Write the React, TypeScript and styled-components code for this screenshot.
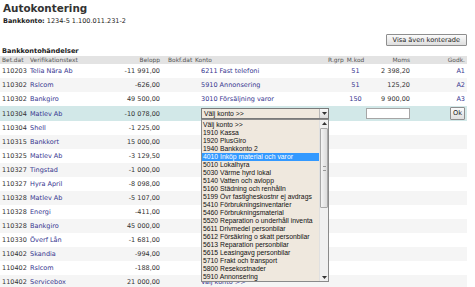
import React from "react";
import styled, { createGlobalStyle } from "styled-components";

const Global = createGlobalStyle`
  html, body { margin: 0; padding: 0; background: #fff; overflow: hidden; }
  body { font-family: "DejaVu Sans", Verdana, sans-serif; color: #333; }
`;

const Page = styled.div`
  padding: 2px 0 0 3px;
  width: 467px;
`;

const Title = styled.h1`
  margin: 0;
  font-size: 10.4px;
  line-height: 13px;
  font-weight: bold;
  color: #333;
`;

const AccountLine = styled.div`
  font-size: 6.5px;
  line-height: 10px;
  margin-top: 1px;
  color: #222;
  b { font-weight: bold; }
`;

const Toolbar = styled.div`
  display: flex;
  justify-content: flex-end;
  margin-top: 8px;
  padding-right: 3px;
`;

const Button = styled.button<{ $h?: number; $px?: number }>`
  font-family: "DejaVu Sans", Verdana, sans-serif;
  font-size: 6.6px;
  color: #222;
  height: ${(p) => p.$h ?? 12}px;
  padding: 0 ${(p) => p.$px ?? 6}px;
  border: 1px solid #8e8e8e;
  border-radius: 1px;
  background: linear-gradient(#fbfbfb, #dedede);
  line-height: 1;
`;

const Section = styled.div`
  margin-left: -3px;
`;

const SectionTitle = styled.div`
  font-size: 6.6px;
  font-weight: bold;
  line-height: 9px;
  padding: 1px 0 0 2px;
  color: #222;
`;

const Table = styled.table`
  border-collapse: collapse;
  table-layout: fixed;
  width: 467px;
  font-size: 6.5px;
`;

const HeadRow = styled.tr`
  background: #e3e3e3;
  height: 8px;
`;

type Align = { $align?: "left" | "right" | "center"; $pl?: number; $pr?: number };

const Th = styled.th<Align>`
  font-weight: normal;
  font-size: 5.9px;
  color: #555;
  text-align: ${(p) => p.$align ?? "left"};
  padding: 0 ${(p) => p.$pr ?? 0}px 0 ${(p) => p.$pl ?? 0}px;
  line-height: 8px;
  white-space: nowrap;
  overflow: hidden;
`;

const Row = styled.tr<{ $variant: "plain" | "stripe" | "active" }>`
  height: ${(p) => (p.$variant === "active" ? 15 : 14)}px;
  background: ${(p) =>
    p.$variant === "active" ? "#d2e8e8" : p.$variant === "stripe" ? "#f5f5f5" : "#fff"};
`;

const Td = styled.td<Align>`
  text-align: ${(p) => p.$align ?? "left"};
  padding: 0 ${(p) => p.$pr ?? 0}px 0 ${(p) => p.$pl ?? 0}px;
  white-space: nowrap;
  overflow: visible;
  color: #333;
  vertical-align: middle;
`;

const Link = styled.span<{ $indent?: number }>`
  color: #35358f;
  padding-left: ${(p) => p.$indent ?? 0}px;
`;

const SelectWrap = styled.div`
  position: relative;
  width: 128px;
  margin-left: 8px;
`;

const SelectBox = styled.div`
  display: flex;
  align-items: center;
  height: 11px;
  box-sizing: border-box;
  border: 1px solid #7a7a7a;
  background: #efe8de;
  font-family: "Liberation Sans", Arial, sans-serif;
  font-size: 6.8px;
  color: #111;
`;

const SelectText = styled.span`
  flex: 1;
  padding-left: 2px;
`;

const ArrowBtn = styled.span`
  width: 8px;
  height: 9px;
  border-left: 1px solid #b8b8b8;
  background: linear-gradient(#fafafa, #dcdcdc);
  display: flex;
  align-items: center;
  justify-content: center;
  svg { display: block; }
`;

const ListBox = styled.div`
  position: absolute;
  left: 0;
  top: 11px;
  width: 128px;
  height: 163px;
  box-sizing: border-box;
  border: 1px solid #8a8a8a;
  background: #efe8de;
  display: flex;
  z-index: 5;
`;

const Options = styled.div`
  flex: 1;
  padding-top: 1px;
  overflow: hidden;
`;

const Option = styled.div<{ $selected?: boolean }>`
  font-family: "Liberation Sans", Arial, sans-serif;
  font-size: 6.8px;
  line-height: 8px;
  height: 8px;
  padding-left: 1px;
  white-space: nowrap;
  overflow: hidden;
  color: ${(p) => (p.$selected ? "#fff" : "#111")};
  background: ${(p) => (p.$selected ? "#3399ff" : "transparent")};
`;

const ScrollBar = styled.div`
  width: 8px;
  background: #f0f0f0;
  border-left: 1px solid #e0e0e0;
  display: flex;
  flex-direction: column;
`;

const ScrollArrow = styled.div`
  height: 7px;
  display: flex;
  align-items: center;
  justify-content: center;
`;

const Thumb = styled.div`
  margin-top: 1px;
  height: 80px;
  box-sizing: border-box;
  border: 1px solid #a8a8a8;
  border-radius: 1px;
  background: linear-gradient(90deg, #f4f4f4, #dcdcdc);
  display: flex;
  align-items: center;
  justify-content: center;
`;

const Grip = styled.div`
  width: 3px;
  height: 3px;
  border-top: 1px solid #999;
  border-bottom: 1px solid #999;
`;

const Track = styled.div`
  flex: 1;
`;

const AmountInput = styled.input`
  width: 44px;
  height: 11px;
  box-sizing: border-box;
  border: 1px solid #a6a6a6;
  background: #fff;
  padding: 0;
  display: block;
  margin-left: auto;
  margin-right: 3px;
`;

type Rec = {
  d: string;
  t: string;
  b: string;
  k?: string;
  m?: string;
  moms?: string;
  g?: string;
  edit?: boolean;
};

const rows: Rec[] = [
  { d: "110203", t: "Telia Nära Ab", b: "-11 991,00", k: "6211 Fast telefoni", m: "51", moms: "2 398,20", g: "A1" },
  { d: "110302", t: "Rslcom", b: "-626,00", k: "5910 Annonsering", m: "51", moms: "125,20", g: "A2" },
  { d: "110302", t: "Bankgiro", b: "49 500,00", k: "3010 Försäljning varor", m: "150", moms: "9 900,00", g: "A3" },
  { d: "110304", t: "Matlev Ab", b: "-10 078,00", edit: true },
  { d: "110304", t: "Shell", b: "-1 225,00" },
  { d: "110315", t: "Bankkort", b: "15 000,00" },
  { d: "110325", t: "Matlev Ab", b: "-3 129,50" },
  { d: "110327", t: "Tingstad", b: "-1 000,00" },
  { d: "110327", t: "Hyra April", b: "-8 098,00" },
  { d: "110328", t: "Matlev Ab", b: "-5 107,00" },
  { d: "110328", t: "Energi", b: "-411,00" },
  { d: "110328", t: "Bankgiro", b: "45 000,00" },
  { d: "110330", t: "Överf Lån", b: "-1 681,00" },
  { d: "110402", t: "Skandia", b: "-994,00" },
  { d: "110402", t: "Rslcom", b: "-188,00" },
  { d: "110402", t: "Servicebox", b: "21 000,00", k: "Välj konto >>" },
];

const options = [
  "Välj konto >>",
  "1910 Kassa",
  "1920 PlusGiro",
  "1940 Bankkonto 2",
  "4010 Inköp material och varor",
  "5010 Lokalhyra",
  "5030 Värme hyrd lokal",
  "5140 Vatten och avlopp",
  "5160 Städning och renhålln",
  "5199 Övr fastigheskostnr ej avdrags",
  "5410 Förbrukningsinventarier",
  "5460 Förbrukningsmaterial",
  "5520 Reparation o underhåll inventa",
  "5611 Drivmedel personbilar",
  "5612 Försäkring o skatt personbilar",
  "5613 Reparation personbilar",
  "5615 Leasingavg personbilar",
  "5710 Frakt och transport",
  "5800 Resekostnader",
  "5910 Annonsering",
];

const Tri = ({ up }: { up?: boolean }) => (
  <svg width="5" height="3" viewBox="0 0 5 3">
    <path d={up ? "M0 3 L2.5 0 L5 3 Z" : "M0 0 L5 0 L2.5 3 Z"} fill="#333" />
  </svg>
);

const widths = [29, 86, 47, 31, 132, 20, 21, 46, 55];

export default function App() {
  return (
    <>
      <Global />
      <Page>
        <Title>Autokontering</Title>
        <AccountLine>
          <b>Bankkonto:</b> 1234-5 1.100.011.231-2
        </AccountLine>
        <Toolbar>
          <Button>Visa även konterade</Button>
        </Toolbar>
        <Section>
          <SectionTitle>Bankkontohändelser</SectionTitle>
          <Table>
            <colgroup>
              {widths.map((w, i) => (
                <col key={i} style={{ width: w }} />
              ))}
            </colgroup>
            <thead>
              <HeadRow>
                <Th $pl={2}>Bet.dat</Th>
                <Th $pl={1}>Verifikationstext</Th>
                <Th $align="right" $pr={2}>Belopp</Th>
                <Th $pl={6}>Bokf.dat</Th>
                <Th $pl={2}>Konto</Th>
                <Th $pl={3}>R.grp</Th>
                <Th $align="center">M.kod</Th>
                <Th $align="right" $pr={2}>Moms</Th>
                <Th $align="right" $pr={2}>Godk.</Th>
              </HeadRow>
            </thead>
            <tbody>
              {rows.map((r, i) => (
                <Row key={i} $variant={r.edit ? "active" : i % 2 === 1 ? "stripe" : "plain"}>
                  <Td $pl={2}>{r.d}</Td>
                  <Td $pl={1}>
                    <Link>{r.t}</Link>
                  </Td>
                  <Td $align="right" $pr={2}>{r.b}</Td>
                  <Td $pl={6}></Td>
                  <Td>
                    {r.edit ? (
                      <SelectWrap>
                        <SelectBox>
                          <SelectText>Välj konto &gt;&gt;</SelectText>
                          <ArrowBtn>
                            <Tri />
                          </ArrowBtn>
                        </SelectBox>
                        <ListBox>
                          <Options>
                            {options.map((o, j) => (
                              <Option key={j} $selected={j === 4}>
                                {o}
                              </Option>
                            ))}
                          </Options>
                          <ScrollBar>
                            <ScrollArrow>
                              <Tri up />
                            </ScrollArrow>
                            <Thumb>
                              <Grip />
                            </Thumb>
                            <Track />
                            <ScrollArrow>
                              <Tri />
                            </ScrollArrow>
                          </ScrollBar>
                        </ListBox>
                      </SelectWrap>
                    ) : r.k ? (
                      <Link $indent={8}>{r.k}</Link>
                    ) : null}
                  </Td>
                  <Td $pl={3}></Td>
                  <Td $align="center">
                    <Link>{r.m}</Link>
                  </Td>
                  <Td $align="right" $pr={2}>
                    {r.edit ? <AmountInput /> : r.moms}
                  </Td>
                  <Td $align="right" $pr={2}>
                    {r.edit ? (
                      <Button $h={13} $px={2}>Ok</Button>
                    ) : (
                      <Link>{r.g}</Link>
                    )}
                  </Td>
                </Row>
              ))}
            </tbody>
          </Table>
        </Section>
      </Page>
    </>
  );
}
